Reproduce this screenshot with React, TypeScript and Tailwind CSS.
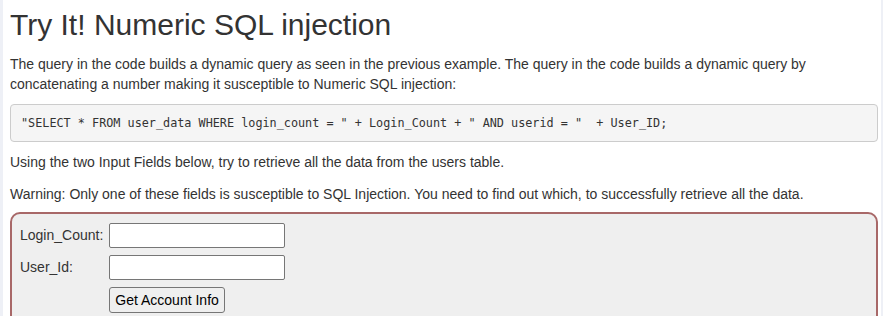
import React from "react";

export default function App() {
  return (
    <div
      className="flex w-[883px] h-[316px] overflow-hidden bg-white text-[#333]"
      style={{ fontFamily: '"Liberation Sans", Arial, sans-serif' }}
    >
      <div className="w-[3px] shrink-0 bg-[#eef0f6]" />
      <div className="flex-1 pl-[7px] pr-[3px]">
        <h2 className="mt-[8px] mb-[13px] text-[30px] leading-[33px] font-normal">
          Try It! Numeric SQL injection
        </h2>
        <p className="text-[14px] leading-[20px] mb-[10px]">
          The query in the code builds a dynamic query as seen in the previous example. The query in the code builds a dynamic query by concatenating a number making it susceptible to Numeric SQL injection:
        </p>
        <pre
          className="bg-[#f5f5f5] border border-[#ccc] rounded-[4px] px-[10px] py-[9px] text-[11.8px] leading-[18px] text-[#333] mb-[10px] whitespace-pre"
          style={{ fontFamily: '"DejaVu Sans Mono", "Liberation Mono", monospace' }}
        >
          {'"SELECT * FROM user_data WHERE login_count = " + Login_Count + " AND userid = "  + User_ID;'}
        </pre>
        <p className="text-[14px] leading-[20px] mb-[12px]">
          Using the two Input Fields below, try to retrieve all the data from the users table.
        </p>
        <p className="text-[14px] leading-[20px] mb-[8px]">
          Warning: Only one of these fields is susceptible to SQL Injection. You need to find out which, to successfully retrieve all the data.
        </p>
        <div className="border-2 border-[#a86868] rounded-[10px] bg-[#efefef] h-[140px] pl-[8px] pt-[9px]">
          <div className="grid grid-cols-[auto_auto] justify-start items-center gap-x-[6px] gap-y-[7px] text-[14px]">
            <label>Login_Count:</label>
            <input className="w-[176px] h-[25px] bg-white border border-[#767676] rounded-[2px]" />
            <label>User_Id:</label>
            <input className="w-[176px] h-[25px] bg-white border border-[#767676] rounded-[2px]" />
            <span />
            <button className="justify-self-start h-[26px] px-[5px] bg-[#efefef] border border-[#767676] rounded-[3px] text-[14px] text-black">
              Get Account Info
            </button>
          </div>
        </div>
      </div>
      <div className="w-[2px] shrink-0 bg-[#eef0f6]" />
    </div>
  );
}
